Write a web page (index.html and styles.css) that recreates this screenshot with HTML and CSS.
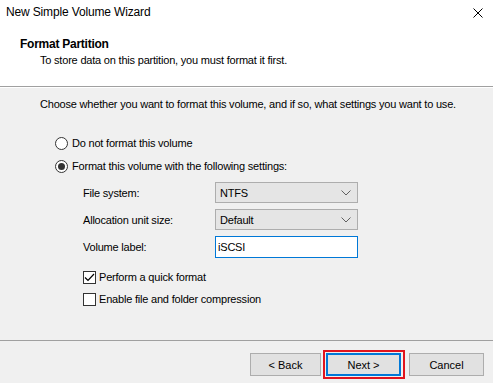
FILE: index.html
```html
<!DOCTYPE html>
<html>
<head>
<meta charset="utf-8">
<link rel="stylesheet" href="styles.css">
</head>
<body>
<div class="window">
  <div class="top">
    <div class="titlebar">
      <span class="title">New Simple Volume Wizard</span>
      <svg class="close" width="10" height="10" viewBox="0 0 10 10"><path d="M0.5 0.5L9.5 9.5M9.5 0.5L0.5 9.5" stroke="#000" stroke-width="1" fill="none"/></svg>
    </div>
    <div class="header">
      <div class="h1">Format Partition</div>
      <div class="sub">To store data on this partition, you must format it first.</div>
    </div>
  </div>
  <div class="sep"></div>
  <div class="content">
    <div class="intro">Choose whether you want to format this volume, and if so, what settings you want to use.</div>
    <div class="radio-row first"><span class="radio"></span><span>Do not format this volume</span></div>
    <div class="radio-row"><span class="radio checked"></span><span>Format this volume with the following settings:</span></div>
    <div class="settings">
      <div class="field"><span class="label">File system:</span><div class="combo"><span>NTFS</span><svg width="10" height="6" viewBox="0 0 10 6"><path d="M0.5 0.5L5 5L9.5 0.5" stroke="#606060" fill="none"/></svg></div></div>
      <div class="field"><span class="label">Allocation unit size:</span><div class="combo"><span>Default</span><svg width="10" height="6" viewBox="0 0 10 6"><path d="M0.5 0.5L5 5L9.5 0.5" stroke="#606060" fill="none"/></svg></div></div>
      <div class="field"><span class="label">Volume label:</span><div class="input">iSCSI</div></div>
      <div class="check-row first"><span class="check checked"><svg width="11" height="9" viewBox="0 0 11 9"><path d="M1 4.5L4 7.5L10 1" stroke="#000" stroke-width="1.2" fill="none"/></svg></span><span>Perform a quick format</span></div>
      <div class="check-row"><span class="check"></span><span>Enable file and folder compression</span></div>
    </div>
  </div>
  <div class="footer">
    <div class="buttons">
      <div class="btn back">&lt; Back</div>
      <div class="btn next">Next &gt;</div>
      <div class="btn cancel">Cancel</div>
    </div>
  </div>
</div>
</body>
</html>
```
FILE: styles.css
```css
html, body { margin: 0; padding: 0; }
body {
  font-family: "Liberation Sans", Arial, sans-serif;
  font-size: 12px;
  color: #000;
  background: #f0f0f0;
}
.window {
  width: 493px;
  height: 383px;
  background: #f0f0f0;
  display: flex;
  flex-direction: column;
  overflow: hidden;
}
.top {
  background: #fff;
  height: 86px;
}
.titlebar {
  height: 30px;
  display: flex;
  align-items: flex-start;
  justify-content: space-between;
  padding: 5px 10px 0 6px;
  box-sizing: border-box;
}
.title { font-size: 12px; line-height: 15px; letter-spacing: -0.15px; }
.close { margin-top: 3px; }
.header { padding-left: 20px; padding-top: 6px; }
.h1 { font-weight: bold; font-size: 12px; line-height: 16px; letter-spacing: -0.25px; }
.sub { padding-left: 20px; font-size: 11px; line-height: 16px; letter-spacing: -0.2px; }
.sep {
  height: 1px;
  background: #a0a0a0;
  border-bottom: 1px solid #fff;
}
.content {
  padding-left: 40px;
  height: 252px;
  box-sizing: border-box;
  padding-top: 8px;
  font-size: 11px;
  letter-spacing: -0.2px;
}
.intro { line-height: 16px; }
.radio-row {
  display: flex;
  align-items: center;
  height: 16px;
  margin-left: 15px;
  margin-top: 7px;
}
.radio-row.first { margin-top: 23px; }
.radio {
  width: 11px;
  height: 11px;
  border: 1px solid #333;
  border-radius: 50%;
  background: #fff;
  margin-right: 4px;
  box-sizing: content-box;
  display: flex;
  align-items: center;
  justify-content: center;
}
.radio.checked::after {
  content: "";
  width: 7px;
  height: 7px;
  border-radius: 50%;
  background: #333;
}
.settings { margin-left: 43px; margin-top: 8px; }
.field {
  display: flex;
  align-items: center;
  height: 21px;
  margin-bottom: 6px;
}
.label { width: 132px; }
.combo {
  width: 143px;
  height: 21px;
  box-sizing: border-box;
  border: 1px solid #adadad;
  background: #e5e5e5;
  display: flex;
  align-items: center;
  justify-content: space-between;
  padding: 0 6px 0 4px;
}
.input {
  width: 143px;
  height: 22px;
  box-sizing: border-box;
  border: 1px solid #0078d7;
  background: #fff;
  padding-left: 2px;
  line-height: 20px;
}
.check-row {
  display: flex;
  align-items: center;
  height: 16px;
  margin-top: 6px;
}
.check-row.first { margin-top: 12px; }
.check {
  width: 11px;
  height: 11px;
  border: 1px solid #333;
  background: #fff;
  margin-right: 3px;
  display: flex;
  align-items: center;
  justify-content: center;
}
.footer {
  border-top: 1px solid #a0a0a0;
  flex: 1;
  display: flex;
  justify-content: flex-end;
  padding: 12px 9px 0 0;
  box-sizing: border-box;
  font-size: 11px;
}
.buttons { display: flex; height: 23px; }
.btn {
  width: 75px;
  height: 23px;
  box-sizing: border-box;
  border: 1px solid #adadad;
  background: #e1e1e1;
  display: flex;
  align-items: center;
  justify-content: center;
}
.btn.back { width: 71px; margin-right: 5px; }
.btn.next {
  position: relative;
  border: 2px solid #0078d7;
}
.btn.next::before {
  content: "";
  position: absolute;
  left: -5px; top: -5px; right: -6px; bottom: -5px;
  border: 2px solid #e0141e;
}
.btn.cancel { margin-left: 8px; }
```
